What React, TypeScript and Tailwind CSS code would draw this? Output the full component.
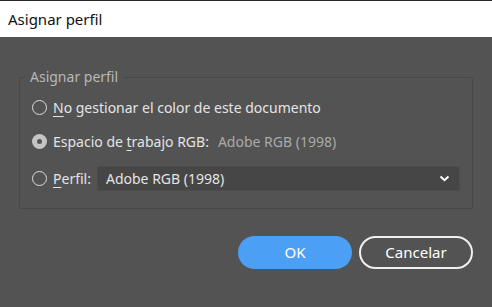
import React from 'react';

function Radio({ checked }: { checked?: boolean }) {
  if (checked) {
    return (
      <span className="flex h-[15px] w-[15px] items-center justify-center rounded-full bg-[#c4c4c4]">
        <span className="h-[5px] w-[5px] rounded-full bg-[#555555]" />
      </span>
    );
  }
  return <span className="h-[15px] w-[15px] rounded-full border-[1.5px] border-[#dcdcdc]" />;
}

export default function App() {
  return (
    <div className="w-[492px] h-[307px] bg-[#535353] font-['Noto_Sans',sans-serif] text-[#e4e4e4]">
      <div className="h-[37px] bg-white border-t border-[#2a2a2a] flex items-center pl-[8px] text-[15px] text-[#111]">
        Asignar perfil
      </div>

      <fieldset className="mx-[19px] mt-[30px] border border-[#484848] rounded-[2px] px-[12px] pb-[17px] pt-[8px]">
        <legend className="-ml-[7px] px-[5px] text-[14px] leading-[20px] text-[#b8b8b8]">Asignar perfil</legend>

        <div className="flex h-[24px] items-center gap-[6px] text-[14px]">
          <Radio />
          <span>
            <span className="underline underline-offset-[3px]">N</span>o gestionar el color de este documento
          </span>
        </div>

        <div className="mt-[10px] flex h-[24px] items-center gap-[6px] text-[14px]">
          <Radio checked />
          <span>
            Espacio de <span className="underline underline-offset-[3px]">t</span>rabajo RGB:
            <span className="ml-[9px] text-[#aaaaaa]">Adobe RGB (1998)</span>
          </span>
        </div>

        <div className="mt-[13px] flex h-[25px] items-center gap-[6px] text-[14px]">
          <Radio />
          <span>
            <span className="underline underline-offset-[3px]">P</span>erfil:
          </span>
          <div className="flex h-[25px] flex-1 items-center justify-between rounded-[2px] border border-[#4c4c4c] bg-[#464646] pl-[8px] pr-[9px]">
            <span>Adobe RGB (1998)</span>
            <svg width="11" height="7" viewBox="0 0 11 7" fill="none">
              <path d="M1.5 1.5L5.5 5.2L9.5 1.5" stroke="#ffffff" strokeWidth="2" />
            </svg>
          </div>
        </div>
      </fieldset>

      <div className="mt-[27px] mr-[19px] flex justify-end gap-[7px]">
        <button className="h-[33px] w-[114px] rounded-full bg-[#4b9ff5] text-[15px] text-white">OK</button>
        <button className="h-[33px] w-[114px] rounded-full border-2 border-[#f0f0f0] text-[15px] text-white">
          Cancelar
        </button>
      </div>
    </div>
  );
}
